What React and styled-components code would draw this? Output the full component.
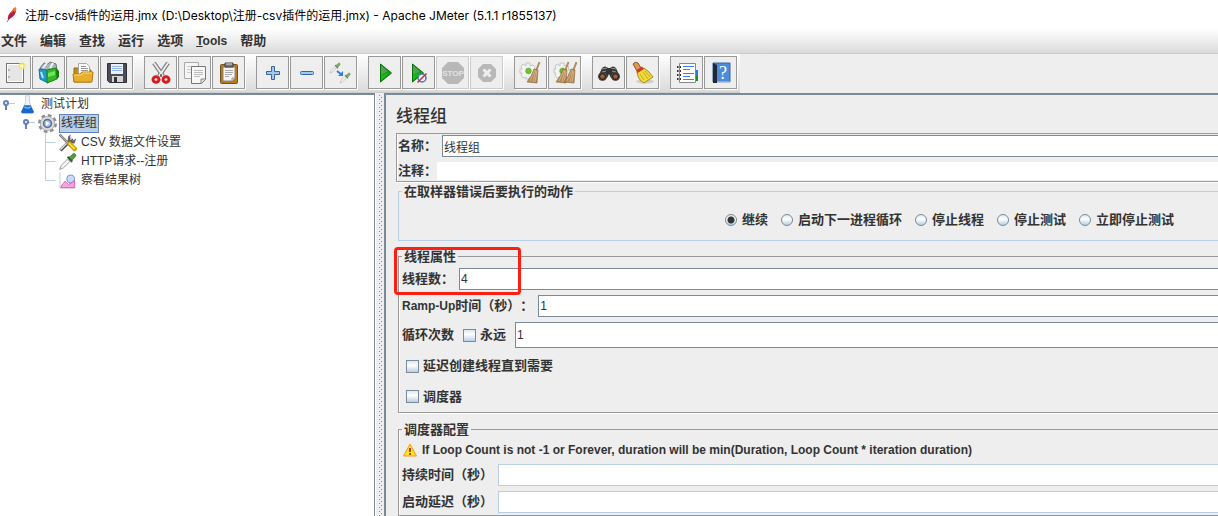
import React from 'react';
import styled, { createGlobalStyle, css } from 'styled-components';

const GlobalStyle = createGlobalStyle`
  * { box-sizing: border-box; }

  html, body, #root {
    height: 100%;
    margin: 0;
  }

  body {
    overflow: hidden;
    background: #eee;
    color: #333;
    font-family: "Liberation Sans", "Noto Sans CJK SC", sans-serif;
    font-size: 12px;
    text-spacing-trim: space-all;
  }

  button, input {
    font: inherit;
    color: inherit;
  }
`;

const Window = styled.div`
  display: flex;
  flex-direction: column;
  height: 100%;
`;

/* --- title bar --- */
const TitleBar = styled.header`
  display: flex;
  align-items: center;
  gap: 6px;
  flex: none;
  height: 29px;
  padding-left: 5px;
  background: #fff;
  color: #000;
  font-family: Inter, "Noto Sans CJK SC", sans-serif;
  white-space: nowrap;
`;

/* --- menu bar --- */
const MenuBar = styled.nav`
  display: flex;
  align-items: center;
  gap: 13px;
  flex: none;
  height: 25px;
  padding-left: 1px;
  background: linear-gradient(#fff, #dadada);
  border-bottom: 1px solid #ccc;
`;

const MenuItem = styled.button`
  padding: 0;
  border: 0;
  background: none;
  font-size: ${(p) => (p.$latin ? 12 : 13)}px;
  font-weight: bold;
  line-height: 20px;

  &::first-letter { text-decoration: ${(p) => (p.$latin ? 'underline' : 'none')}; }
`;

/* --- tool bar --- */
const ToolBar = styled.div`
  display: flex;
  align-items: flex-start;
  align-self: flex-start;
  gap: 11px;
  flex: none;
  height: 39px;
  margin-left: -2px;
  padding: 2px 3px 0 0;
  background: linear-gradient(#fff, #dadada);
  border-bottom: 1px solid #ccc;
`;

const ToolGroup = styled.div`
  display: flex;
  gap: 1px;
`;

const ToolButton = styled.button`
  display: flex;
  align-items: center;
  justify-content: center;
  width: 33px;
  height: 33px;
  padding: 0;
  border: 1px solid #999;
  background: #eee;
  box-shadow: 1px 1px 0 #fff;

  &:disabled { border-color: #ccc; }
`;

/* --- split pane --- */
const SplitPane = styled.div`
  display: flex;
  flex: 1;
  min-height: 0;
`;

const TreePane = styled.aside`
  flex: none;
  width: 375px;
  border: solid #7a8a99;
  border-width: 2px 1px 0 0;
  background: #fff;
`;

const Divider = styled.div`
  flex: none;
  width: 9px;
  padding: 2px 1px 0 3px;
  border-left: 1px solid #fff;
  background:
    conic-gradient(at 1px 1px, transparent 75%, #7a8a99 0) 0 0 / 4px 4px content-box,
    conic-gradient(at 1px 1px, transparent 75%, #7a8a99 0) 2px 2px / 4px 4px content-box;
`;

const MainPane = styled.main`
  flex: 1;
  min-width: 0;
  overflow: hidden;
  padding: 10px 0 0 10px;
  border: solid #7a8a99;
  border-width: 2px 0 0 2px;
`;

/* --- tree --- */
const Tree = styled.ul`
  margin: 0;
  padding: 0;
  list-style: none;
`;

const TreeRow = styled.li`
  display: flex;
  align-items: center;
  height: 19px;
  padding-left: ${(p) => p.$level * 20}px;
  line-height: 17px;
`;

const TreeLabel = styled.span`
  margin-left: 2px;
  padding: 0 1px;
  border: 1px solid ${(p) => (p.$selected ? '#6382bf' : 'transparent')};
  background: ${(p) => (p.$selected ? '#b8cfe5' : 'none')};
`;

/* --- forms --- */
const Heading = styled.h1`
  margin: 0;
  font-size: 17px;
  font-weight: 500;
  line-height: 24px;
`;

const etched = css`
  border: 1px solid #999;
  border-right: 0;
  box-shadow: inset 1px 0 0 #fff, 0 1px 0 #fff;
`;

const NamePanel = styled.section`
  ${etched}
  display: grid;
  gap: 4px;
  margin-top: 4px;
  padding: 1px 0 0 1px;
`;

const Group = styled.fieldset`
  ${(p) => (p.$soft ? css`border: 1px solid #b8cfe5; border-right: 0;` : etched)}
  min-width: 0;
  margin: ${(p) => p.$top}px 0 0 2px;
  padding: 0 0 0 3px;
`;

const Legend = styled.legend`
  padding: 2px 2px 0;
  font-size: 13px;
  font-weight: bold;
  line-height: 16px;
`;

const Row = styled.div`
  display: flex;
  align-items: center;
  height: ${(p) => p.$height || 27}px;
`;

const Label = styled.label`
  flex: none;
  margin-right: ${(p) => p.$gap || 0}px;
  font-size: 13px;
  font-weight: bold;
  line-height: 16px;
  white-space: nowrap;
`;

const Latin = styled.span`
  font-size: 12px;
`;

const TextField = styled.input`
  flex: 1;
  min-width: 0;
  height: ${(p) => p.$height || 22}px;
  padding: 0 1px;
  border: 1px solid ${(p) => (p.$soft ? '#b8cfe5' : '#7a8a99')};
  border-right: 0;
  border-radius: 0;
  background: #fff;
  outline: none;
`;

const CommentField = styled(TextField)`
  border: 0;
`;

const RadioRow = styled.div`
  display: flex;
  align-items: center;
  justify-content: flex-end;
  gap: 13px;
  height: 40px;
  padding-right: 44px;
`;

const Choice = styled.label`
  display: flex;
  align-items: center;
  gap: 4px;
  font-size: 13px;
  font-weight: bold;
  line-height: 16px;
  white-space: nowrap;
`;

const Radio = styled.input`
  appearance: none;
  width: 12px;
  height: 12px;
  margin: 0 1px 0 0;
  border: 1px solid #7a8a99;
  border-radius: 50%;
  background: linear-gradient(#dce8f3, #fff 40%, #b8cfe5);

  &:checked {
    background: radial-gradient(circle, #333 3px, transparent 4px), linear-gradient(#dce8f3, #fff 40%, #b8cfe5);
  }
`;

const CheckBox = styled.input`
  appearance: none;
  width: 13px;
  height: 13px;
  margin: 0;
  border: 1px solid #7a8a99;
  background: linear-gradient(#dce8f3, #fff 40%, #b8cfe5);
`;

const LoopChoice = styled(Choice)`
  margin: 0 9px;
`;

const Indented = styled(Row)`
  padding-left: 4px;
`;

const ThreadSection = styled.div`
  position: relative;
`;

/* red frame drawn over the thread count */
const Marker = styled.div`
  position: absolute;
  top: 0;
  left: -2px;
  width: 127px;
  height: 48px;
  border: 3px solid #ff1e12;
  border-radius: 4px;
  pointer-events: none;
`;

const Warning = styled(Row)`
  gap: 4px;
  font-weight: bold;
  white-space: nowrap;
`;

/* --- icons --- */
const Svg = ({ size = 24, children }) => (
  <svg width={size} height={size} viewBox="0 0 24 24" aria-hidden="true">{children}</svg>
);

const Feather = () => (
  <svg width="14" height="18" viewBox="0 0 14 18" aria-hidden="true">
    <path d="M2 16 L4 13" stroke="#777" />
    <path d="M3 14 Q2 9 6 6 L9 2 Q12 0 11 5 Q10 10 6 12Z" fill="#c8203a" />
    <path d="M6 7 L9 2 Q12 0 11 5Z" fill="#ee7a28" />
    <path d="M4 13 L9 5" stroke="#6f2362" />
  </svg>
);

const NewIcon = () => (
  <Svg>
    <rect x="3.5" y="2.5" width="17" height="19" fill="#e6e6e6" stroke="#777" />
    <path d="M4.500 3.500h15v17h-15z" fill="none" stroke="#fff" />
    <path d="M5 9h2M5 16h2" stroke="#888" />
    <circle cx="19" cy="5" r="3.5" fill="#f6e95f" opacity=".85" />
    <circle cx="19" cy="5" r="1.6" fill="#fff" />
  </Svg>
);

const TemplatesIcon = () => (
  <Svg>
    <path d="M3 7 L7 2 L11 3 L13 1 L19 3 L20 9 L9 12Z" fill="#a6b5b8" stroke="#657b80" />
    <path d="M6 7l4-5M13 7l3-5" stroke="#eef6f7" strokeWidth="2" />
    <path d="M2 8 L10 9 L11 22 L3 18Z" fill="#2497d3" stroke="#1273a8" />
    <path d="M4 11l2 6" stroke="#b9e7ff" strokeWidth="2" />
    <path d="M10 9 L19 7 L20 18 L10 22Z" fill="#35b824" stroke="#16880e" />
    <path d="M19 7l3 3v6l-2 2Z" fill="#147b12" />
    <path d="M11 12l7-2v4l-7 2z" fill="#72e25b" />
  </Svg>
);

const OpenIcon = () => (
  <Svg>
    <path d="M3 7h6l2 2h9v12H3z" fill="#c58c16" stroke="#9c6b0e" />
    <path d="M7.500 2.500h8l3 3v10h-11z" fill="#fff" stroke="#aaa" />
    <path d="M10 5.500h5M10 7.500h7M10 9.500h7" stroke="#999" />
    <path d="M2 13h7l2-2h11l-1 10H3z" fill="#e9ae2d" stroke="#b67d12" />
    <path d="M3 14h7l2-2h9" fill="none" stroke="#ffdc77" />
  </Svg>
);

const SaveIcon = () => (
  <Svg>
    <path d="M2.500 2.500h19v19h-17l-2-2z" fill="#4b4c55" stroke="#30313a" />
    <path d="M6 3h12v10H6z" fill="#e8f1fb" />
    <path d="M7 5.500h10M7 7.500h10M7 9.500h10" stroke="#93b5df" />
    <path d="M7 15h11v6H7z" fill="#d3d3d3" />
    <path d="M9 16h3v5H9z" fill="#333" />
  </Svg>
);

const CutIcon = () => (
  <Svg>
    <path d="M5 2l9 13M19 2l-9 13" stroke="#777" strokeWidth="4" />
    <path d="M5 2l9 13M19 2l-9 13" stroke="#eee" strokeWidth="2" />
    <ellipse cx="7" cy="18.5" rx="3" ry="2.7" fill="none" stroke="#d31d21" strokeWidth="3" />
    <ellipse cx="17" cy="18.5" rx="3" ry="2.7" fill="none" stroke="#d31d21" strokeWidth="3" />
    <circle cx="12" cy="14" r="1" fill="#555" />
  </Svg>
);

const CopyIcon = () => (
  <Svg>
    <path d="M1.5 1.5h14v16h-14z" fill="#f5f5f5" stroke="#aaa" />
    <path d="M4 5.500h7M4 8.500h4M4 11.500h4" stroke="#ccc" />
    <path d="M8.5 5.5h14v13l-4 4h-10z" fill="#f7f7f7" stroke="#777" />
    <path d="M11 9.500h9M11 11.500h9M11 13.500h9M11 15.500h6" stroke="#bbb" />
    <path d="M18 22v-4h4" fill="#ddd" stroke="#888" />
  </Svg>
);

const PasteIcon = () => (
  <Svg>
    <rect x="3.5" y="3.5" width="17" height="19" rx="1" fill="#b97818" stroke="#78501a" />
    <path d="M6 6h12v11l-3 3H6z" fill="#f4f4f4" stroke="#888" />
    <path d="M8 9.500h8M8 11.500h8M8 13.500h7M8 15.500h4" stroke="#aaa" />
    <path d="M15 20v-3h3" fill="#ddd" stroke="#999" />
    <path d="M8 2h8v4H8z" fill="#777" stroke="#444" />
    <path d="M9 3h6" stroke="#ddd" />
  </Svg>
);

const PlusIcon = () => (
  <Svg>
    <path d="M10.5 5.5h3v5h5v3h-5v5h-3v-5h-5v-3h5z" fill="#a6c7ea" stroke="#3465a4" />
  </Svg>
);

const MinusIcon = () => (
  <Svg>
    <rect x="5.5" y="10.5" width="13" height="3" rx="1" fill="#a6c7ea" stroke="#3465a4" />
  </Svg>
);

const Pipette = () => (
  <>
    <path d="M2 22l2-5 8-8 3 3-8 8z" fill="#f4f4f4" stroke="#888" />
    <path d="M12 7l3-1 3-3q3-2 4 0t-1 4l-3 3-1 3z" fill="#56983f" stroke="#356e28" />
    <path d="M12 6l6 6" stroke="#315a2b" strokeWidth="2" />
  </>
);

const ToggleIcon = () => (
  <Svg>
    <g transform="translate(0 1) scale(.5)" opacity=".75"><Pipette /></g>
    <g transform="translate(10 11) scale(.5)" opacity=".75"><Pipette /></g>
    <path d="M8 10l5 4" stroke="#2e7fed" strokeWidth="2" />
    <path d="M14 10v5H9z" fill="#2e7fed" />
  </Svg>
);

const StartIcon = () => (
  <Svg>
    <path d="M7.500 3v18l11-9z" fill="#12a312" stroke="#087008" />
    <path d="M8 4.500l7 6-7 3z" fill="#5a9d5a" />
    <path d="M8 14l8-2-8 8z" fill="#16bb16" />
  </Svg>
);

const StartNoPauseIcon = () => (
  <Svg>
    <path d="M5.500 3v18l11-9z" fill="#12a312" stroke="#087008" />
    <path d="M6 4.500l7 6-7 3z" fill="#5a9d5a" />
    <path d="M6 14l7-2-7 8z" fill="#16bb16" />
    <circle cx="15" cy="17" r="4" fill="#e9f1fb" stroke="#4778b8" strokeWidth="1.5" />
    <path d="M10.500 21.500l9-9" stroke="#d22b2b" strokeWidth="1.5" />
  </Svg>
);

const StopIcon = () => (
  <Svg>
    <path d="M7 1h10l6 6v10l-6 6H7l-6-6V7z" fill="#b8b8b8" />
    <text x="12" y="15" textAnchor="middle" fontSize="8" fontWeight="bold" fill="#e2e2e2">STOP</text>
  </Svg>
);

const ShutdownIcon = () => (
  <Svg>
    <path d="M8 3h8l5 5v8l-5 5H8l-5-5V8z" fill="#b8b8b8" />
    <path d="M8.500 8.500l7 7M15.500 8.500l-7 7" stroke="#eee" strokeWidth="3" />
  </Svg>
);

const Broom = ({ x = 0 }) => (
  <g transform={`translate(${x} 0)`}>
    <path d="M20.500 1L17 10" stroke="#b38a5c" strokeWidth="2" />
    <path d="M15 8l4 1-1 13-10-1q5-6 7-13z" fill="#b58a59" stroke="#8a6238" strokeWidth=".6" />
    <path d="M16 9l-5 11M17 9l-3 12M18 10l-2 11" stroke="#dcbf96" strokeWidth=".7" />
  </g>
);

const GearBall = () => (
  <>
    <path
      d="M7 2h4v3l3-1 2 2-1 3h3v4h-3l1 3-3 2-3-1v1H7v-2l-3 1-2-3 1-2H1V8h2L2 5l2-2 3 2z"
      fill="#f3f3f3" stroke="#c4c4c4"
    />
    <circle cx="9.500" cy="9.500" r="3.500" fill="#d6ecc2" />
    <circle cx="9.500" cy="10" r="2.700" fill="#6dc52d" stroke="#4b9a17" strokeWidth=".6" />
  </>
);

const ClearIcon = () => (
  <Svg><GearBall /><Broom /></Svg>
);

const ClearAllIcon = () => (
  <Svg><GearBall /><Broom x={-5} /><Broom x={3} /></Svg>
);

const SearchIcon = () => (
  <Svg>
    <path d="M1 16L5 7q3-3 6 0h2q3-3 6 0l4 9-4 3-5-2-2-4-2 4-5 2z" fill="#333" />
    <path d="M5 8l5-1M14 7l5 1M5 11l4-1M15 10l4 1" stroke="#999" />
    <circle cx="5.500" cy="15.500" r="4" fill="#222" stroke="#555" />
    <circle cx="18.500" cy="15.500" r="4" fill="#222" stroke="#555" />
    <circle cx="5.500" cy="15.500" r="2.300" fill="#a75d2d" />
    <circle cx="18.500" cy="15.500" r="2.300" fill="#a75d2d" />
  </Svg>
);

const ResetIcon = () => (
  <Svg>
    <ellipse cx="14" cy="20.500" rx="9" ry="2" fill="#cfcfcf" />
    <path d="M2 3q2-3 5-1l3 5-4 3z" fill="#d89b54" stroke="#8d5a23" />
    <path d="M6 11l7-4q6 4 9 9l-9 6q-6-3-7-11z" fill="#f2dc3c" stroke="#a28a11" />
    <path d="M12 11l5 7M14 10l5 6M9 13l4 6" stroke="#c0a81d" />
    <path d="M5 9.500l6-4 2 2.500-6.500 4z" fill="#d93226" />
  </Svg>
);

const FunctionIcon = () => (
  <Svg>
    <path d="M19 9h4v6h-4z" fill="#2c76dd" />
    <path d="M19 15h4v5h-4z" fill="#18902a" />
    <path d="M4.500 2.500h16v19h-16z" fill="#fff" stroke="#888" />
    <path d="M8 5.500h11M8 8.500h7M8 12.500h11M8 15.500h7M8 18.500h11" stroke="#3f83e2" />
    <path d="M2 6h4M2 10h4M2 14h4M2 18h4" stroke="#333" strokeWidth="2" />
    <path d="M3 6h2M3 10h2M3 14h2M3 18h2" stroke="#ddd" />
  </Svg>
);

const HelpIcon = () => (
  <Svg>
    <path d="M4 2h17v19H4z" fill="#4d8bdc" stroke="#3269ae" />
    <path d="M4 2l4 2v18H4z" fill="#25282c" />
    <path d="M8 21h13" stroke="#ddd" />
    <text x="14" y="18" textAnchor="middle" fontFamily="Liberation Serif, serif" fontSize="18" fill="#fff">?</text>
  </Svg>
);

const HandleIcon = () => (
  <svg width="18" height="19" viewBox="0 0 18 19" aria-hidden="true">
    <circle cx="6" cy="8" r="2" fill="#fff" stroke="#6382bf" strokeWidth="2" />
    <path d="M6 10v5" stroke="#6382bf" strokeWidth="2" />
    <path d="M9 8.500h6" stroke="#b8cfe5" />
  </svg>
);

const Branch = ({ last }) => (
  <svg width="18" height="19" viewBox="0 0 18 19" aria-hidden="true">
    <path d={last ? 'M5.500 0v9.500h10' : 'M5.500 0v19M5.500 9.500h10'} fill="none" stroke="#b8cfe5" />
  </svg>
);

const FlaskIcon = () => (
  <Svg size={19}>
    <path d="M9.500 1h5v8l5 12q0 2-2 2h-11q-2 0-2-2l5-12z" fill="#eef2fa" stroke="#c3c8d6" />
    <path d="M8 13h8l4 8q0 2-2 2H6q-2 0-2-2z" fill="#1769c5" />
    <path d="M8 15q4 3 8 0" stroke="#67b5f0" strokeWidth="2" fill="none" />
  </Svg>
);

const GearIcon = () => (
  <Svg size={19}>
    <circle cx="12" cy="12" r="10" fill="none" stroke="#8f8f8f" strokeWidth="4" strokeDasharray="4.500 3.354" />
    <circle cx="12" cy="12" r="9" fill="#dcdcdc" stroke="#a0a0a0" />
    <circle cx="12" cy="12" r="5" fill="#a9c2e4" stroke="#536f9b" strokeWidth="2" />
    <path d="M10 9l5 3-5 3z" fill="#fff" />
  </Svg>
);

const ToolsIcon = () => (
  <Svg size={19}>
    <path d="M3 22L18 7" stroke="#444" strokeWidth="4" />
    <path d="M3 21L18 6" stroke="#ddd" strokeWidth="2" />
    <path d="M16 2l-1 6 3 2 5-3-2 6-5 1-4-4 1-6z" fill="#666" />
    <path d="M2 2l11 11" stroke="#777" strokeWidth="3" />
    <path d="M2 2l11 11" stroke="#ccc" />
    <path d="M15 14l6 6" stroke="#d6a400" strokeWidth="6" strokeLinecap="round" />
    <path d="M14 13l7 7" stroke="#ffe24c" strokeWidth="2" />
  </Svg>
);

const SamplerIcon = () => <Svg size={19}><Pipette /></Svg>;

const ChartIcon = () => (
  <Svg size={19}>
    <path d="M2.500 2v19.500H22" fill="none" stroke="#bbb" />
    <circle cx="16" cy="10" r="5" fill="#c9dcfa" stroke="#5582d3" />
    <path d="M4 19l5-6 4 4 4-2 4-3v9H4z" fill="#f5a5dc" stroke="#d949a6" />
  </Svg>
);

const WarningIcon = () => (
  <svg width="16" height="16" viewBox="0 0 16 16" aria-hidden="true">
    <path d="M8 2L14.500 14h-13z" fill="#ffe11c" stroke="#ee9a2a" strokeLinejoin="round" />
    <path d="M8 6v4M8 11v2" stroke="#c33c10" strokeWidth="2" />
  </svg>
);

const menus = ['文件', '编辑', '查找', '运行', '选项', 'Tools', '帮助'];

const tools = [
  [['新建', NewIcon], ['模板', TemplatesIcon], ['打开', OpenIcon], ['保存', SaveIcon]],
  [['剪切', CutIcon], ['复制', CopyIcon], ['粘贴', PasteIcon]],
  [['展开', PlusIcon], ['折叠', MinusIcon], ['切换', ToggleIcon]],
  [['启动', StartIcon], ['不停顿开始', StartNoPauseIcon], ['停止', StopIcon, true], ['关闭', ShutdownIcon, true]],
  [['清除', ClearIcon], ['清除全部', ClearAllIcon]],
  [['查找', SearchIcon], ['重置搜索', ResetIcon]],
  [['函数助手', FunctionIcon], ['帮助', HelpIcon]],
];

const errorActions = ['继续', '启动下一进程循环', '停止线程', '停止测试', '立即停止测试'];

const App = () => (
  <Window>
    <GlobalStyle />
    <TitleBar>
      <Feather />
      <span>注册-csv插件的运用.jmx (D:\Desktop\注册-csv插件的运用.jmx) - Apache JMeter (5.1.1 r1855137)</span>
    </TitleBar>

    <MenuBar>
      {menus.map((name) => (
        <MenuItem key={name} $latin={name === 'Tools'}>{name}</MenuItem>
      ))}
    </MenuBar>

    <ToolBar>
      {tools.map((group, i) => (
        <ToolGroup key={i}>
          {group.map(([name, Icon, disabled]) => (
            <ToolButton key={name} aria-label={name} disabled={disabled}><Icon /></ToolButton>
          ))}
        </ToolGroup>
      ))}
    </ToolBar>

    <SplitPane>
      <TreePane>
        <Tree>
          <TreeRow $level={0}><HandleIcon /><FlaskIcon /><TreeLabel>测试计划</TreeLabel></TreeRow>
          <TreeRow $level={1}><HandleIcon /><GearIcon /><TreeLabel $selected>线程组</TreeLabel></TreeRow>
          <TreeRow $level={2}><Branch /><ToolsIcon /><TreeLabel>CSV 数据文件设置</TreeLabel></TreeRow>
          <TreeRow $level={2}><Branch /><SamplerIcon /><TreeLabel>HTTP请求--注册</TreeLabel></TreeRow>
          <TreeRow $level={2}><Branch last /><ChartIcon /><TreeLabel>察看结果树</TreeLabel></TreeRow>
        </Tree>
      </TreePane>
      <Divider />

      <MainPane>
        <Heading>线程组</Heading>

        <NamePanel>
          <Row $height={22}>
            <Label htmlFor="name" $gap={5}>名称：</Label>
            <TextField id="name" defaultValue="线程组" />
          </Row>
          <Row $height={20}>
            <Label htmlFor="comment">注释：</Label>
            <CommentField id="comment" $height={18} />
          </Row>
        </NamePanel>

        <Group $soft $top={0}>
          <Legend>在取样器错误后要执行的动作</Legend>
          <RadioRow>
            {errorActions.map((name, i) => (
              <Choice key={name}>
                <Radio type="radio" name="onError" defaultChecked={i === 0} />
                {name}
              </Choice>
            ))}
          </RadioRow>
        </Group>

        <ThreadSection>
          <Group $top={6}>
            <Legend>线程属性</Legend>
            <Row>
              <Label htmlFor="threads" $gap={5}>线程数：</Label>
              <TextField id="threads" defaultValue="4" />
            </Row>
            <Row>
              <Label htmlFor="ramp" $gap={5}><Latin>Ramp-Up</Latin>时间（秒）：</Label>
              <TextField id="ramp" defaultValue="1" />
            </Row>
            <Row $height={32}>
              <Label htmlFor="loops">循环次数</Label>
              <LoopChoice><CheckBox type="checkbox" />永远</LoopChoice>
              <TextField id="loops" defaultValue="1" $height={26} />
            </Row>
            <Indented $height={30}>
              <Choice><CheckBox type="checkbox" />延迟创建线程直到需要</Choice>
            </Indented>
            <Indented $height={31}>
              <Choice><CheckBox type="checkbox" />调度器</Choice>
            </Indented>
          </Group>
          <Marker />
        </ThreadSection>

        <Group $top={7}>
          <Legend>调度器配置</Legend>
          <Warning $height={23}>
            <WarningIcon />
            If Loop Count is not -1 or Forever, duration will be min(Duration, Loop Count * iteration duration)
          </Warning>
          <Row>
            <Label htmlFor="duration" $gap={5}>持续时间（秒）</Label>
            <TextField id="duration" $soft />
          </Row>
          <Row>
            <Label htmlFor="delay" $gap={5}>启动延迟（秒）</Label>
            <TextField id="delay" $soft />
          </Row>
        </Group>
      </MainPane>
    </SplitPane>
  </Window>
);

export default App;
